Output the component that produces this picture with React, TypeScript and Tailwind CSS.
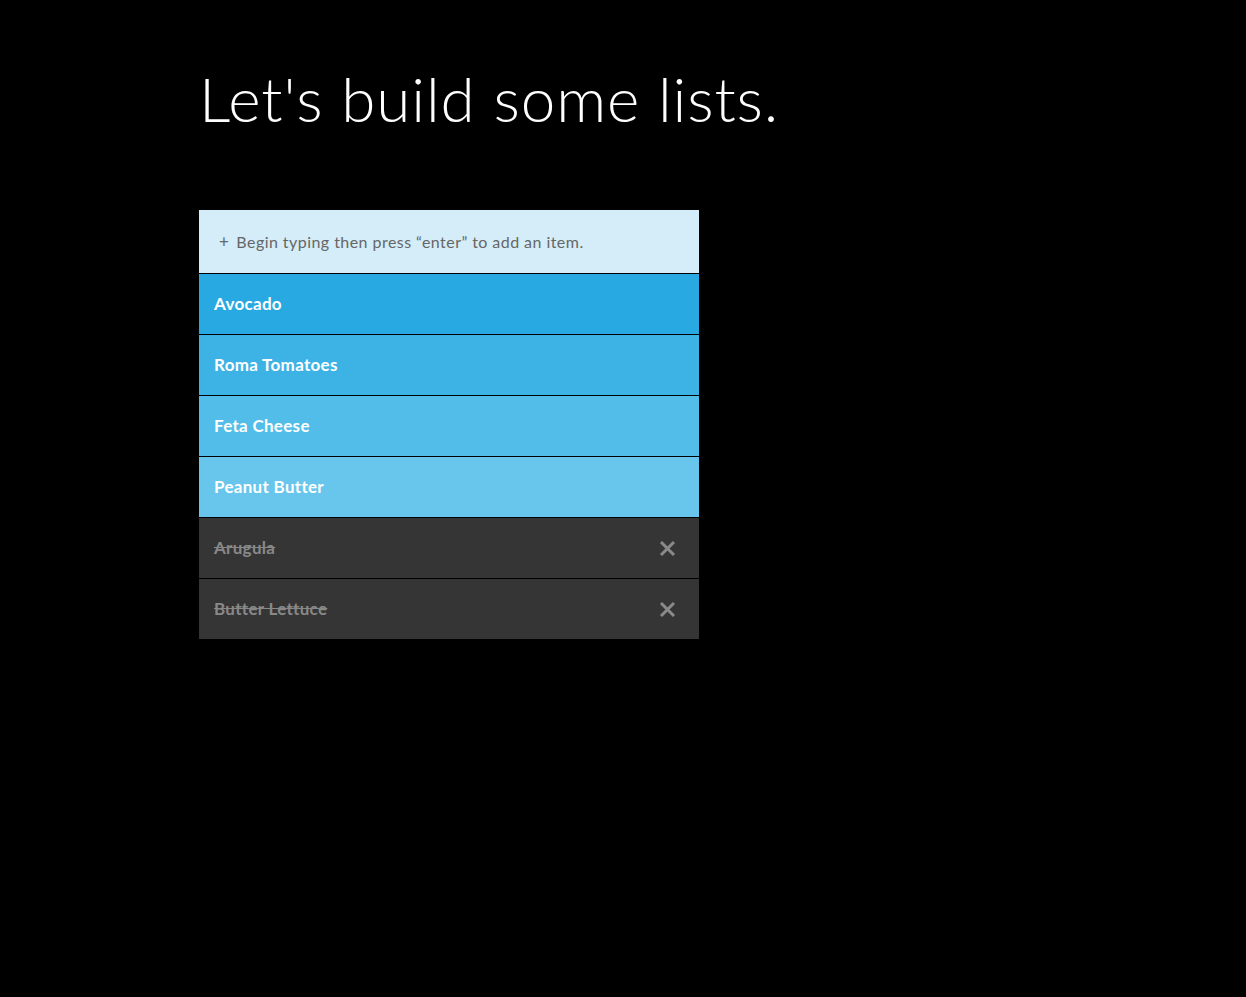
import React from "react";

const items = [
  { name: "Avocado", bg: "bg-[#29a9e1]" },
  { name: "Roma Tomatoes", bg: "bg-[#3db3e5]" },
  { name: "Feta Cheese", bg: "bg-[#52bde9]" },
  { name: "Peanut Butter", bg: "bg-[#68c5eb]" },
];

const done = ["Arugula", "Butter Lettuce"];

export default function App() {
  return (
    <div className="min-h-[997px] bg-black font-['Lato','Open_Sans',sans-serif]">
      <div className="pl-[199px] pt-[58px]">
        <h1 className="text-[62px] font-light leading-[80px] text-white tracking-[0.9px]">
          Let's build some lists.
        </h1>
        <ul className="mt-[72px] w-[500px]">
          <li className="flex h-[63px] items-center bg-[#d4edf8] pl-[20px] text-[16px] tracking-[0.45px] text-[#666]">
            <span className="mr-[7px] text-[17px] leading-none">+</span>
            Begin typing then press “enter” to add an item.
          </li>
          {items.map((it) => (
            <li
              key={it.name}
              className={`flex h-[61px] items-center border-t border-black pl-[15px] text-[17px] font-bold tracking-[0.3px] text-white ${it.bg}`}
            >
              {it.name}
            </li>
          ))}
          {done.map((d) => (
            <li
              key={d}
              className="flex h-[61px] items-center justify-between border-t border-black bg-[#353535] pl-[15px] pr-[23px] text-[17px] font-bold tracking-[0.3px] text-[#888]"
            >
              <span className="line-through">{d}</span>
              <svg width="17" height="17" viewBox="0 0 17 17">
                <path d="M2 2L15 15M15 2L2 15" stroke="#8a8a8a" strokeWidth="3" />
              </svg>
            </li>
          ))}
        </ul>
      </div>
    </div>
  );
}
